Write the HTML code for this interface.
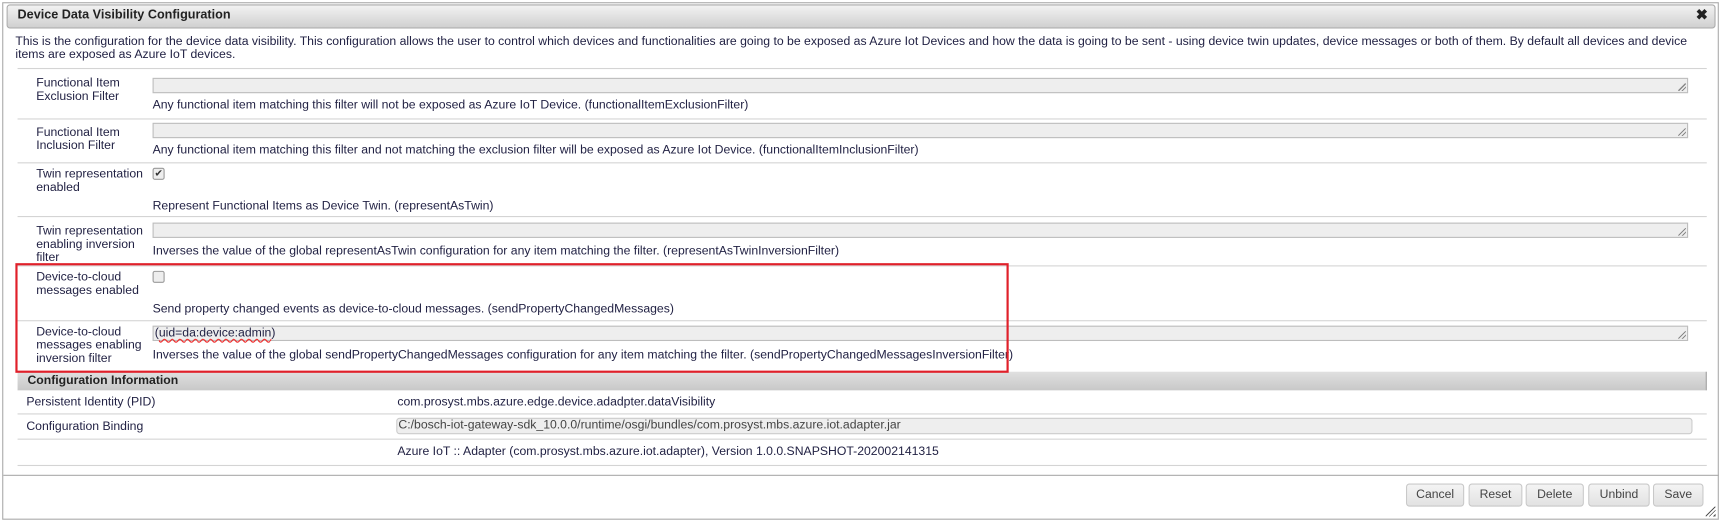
<!DOCTYPE html>
<html><head><meta charset="utf-8"><style>
*{margin:0;padding:0;box-sizing:border-box}
html,body{width:1721px;height:523px;background:#fff;overflow:hidden}
#w{position:absolute;left:0;top:0;width:1568px;height:477px;transform:scale(1.0976,1.0965);transform-origin:0 0;font-family:"Liberation Sans",sans-serif;font-size:11.15px;color:#222244}
.a{position:absolute;white-space:nowrap}
.hl{position:absolute;height:1px;background:#d4d4d4}
.ta{position:absolute;height:14px;background:#eeeeee;border:1px solid #bdbdbd}
.ta:after{content:"";position:absolute;right:1px;bottom:1px;width:7px;height:7px;background:linear-gradient(135deg,transparent 45%,#888 45%,#888 55%,transparent 55%,transparent 70%,#888 70%,#888 80%,transparent 80%)}
.btn{position:absolute;top:441px;height:21px;border:1px solid #c8c8c8;border-radius:3px;background:linear-gradient(#f4f4f4,#e2e2e2);color:#444;text-align:center;line-height:19px;font-size:11.1px}
.lab{position:absolute;left:33px;line-height:12px;white-space:nowrap}
</style></head><body><div id="w">
<div style="position:absolute;left:2px;top:2px;width:1564px;height:472px;border:1px solid #aaa"></div>
<div style="position:absolute;left:6px;top:4px;width:1557px;height:22px;border:1px solid #aaa;border-radius:3px;background:linear-gradient(#f2f2f2,#d0d0d0)"></div>
<div class="a" style="left:16px;top:8px;font-weight:bold;font-size:11.5px;color:#222">Device Data Visibility Configuration</div>
<div class="a" style="left:1545px;top:6px;font-weight:bold;font-size:13px;color:#222">✖</div>
<div class="a" style="left:14px;top:32px;line-height:12px">This is the configuration for the device data visibility. This configuration allows the user to control which devices and functionalities are going to be exposed as Azure Iot Devices and how the data is going to be sent - using device twin updates, device messages or both of them. By default all devices and device<br>items are exposed as Azure IoT devices.</div>

<div class="hl" style="left:16px;width:1539px;top:62px"></div>
<div class="lab" style="top:70px">Functional Item<br>Exclusion Filter</div>
<div class="ta" style="left:139px;width:1399px;top:71px"></div>
<div class="a" style="left:139px;top:90px">Any functional item matching this filter will not be exposed as Azure IoT Device. (functionalItemExclusionFilter)</div>

<div class="hl" style="left:16px;width:1539px;top:108px"></div>
<div class="lab" style="top:115px">Functional Item<br>Inclusion Filter</div>
<div class="ta" style="left:139px;width:1399px;top:112px"></div>
<div class="a" style="left:139px;top:131px">Any functional item matching this filter and not matching the exclusion filter will be exposed as Azure Iot Device. (functionalItemInclusionFilter)</div>

<div class="hl" style="left:16px;width:1539px;top:148px"></div>
<div class="lab" style="top:153px">Twin representation<br>enabled</div>
<div style="position:absolute;left:139px;top:153px;width:11px;height:11px;border:1px solid #999;border-radius:2px;background:#eee;font-size:9px;line-height:9px;text-align:center;color:#333">✔</div>
<div class="a" style="left:139px;top:182px">Represent Functional Items as Device Twin. (representAsTwin)</div>

<div class="hl" style="left:16px;width:1539px;top:197px"></div>
<div class="lab" style="top:205px">Twin representation<br>enabling inversion<br>filter</div>
<div class="ta" style="left:139px;width:1399px;top:203px"></div>
<div class="a" style="left:139px;top:223px">Inverses the value of the global representAsTwin configuration for any item matching the filter. (representAsTwinInversionFilter)</div>

<div class="hl" style="left:16px;width:1539px;top:242px"></div>
<div class="lab" style="top:247px">Device-to-cloud<br>messages enabled</div>
<div style="position:absolute;left:139px;top:247px;width:11px;height:11px;border:1px solid #999;border-radius:2px;background:#eee"></div>
<div class="a" style="left:139px;top:276px">Send property changed events as device-to-cloud messages. (sendPropertyChangedMessages)</div>

<div class="hl" style="left:16px;width:1539px;top:292px"></div>
<div class="lab" style="top:297px">Device-to-cloud<br>messages enabling<br>inversion filter</div>
<div class="ta" style="left:139px;width:1399px;top:297px"></div>
<div class="a" style="left:141px;top:297px;line-height:14px">(<span style="text-decoration:underline wavy #e33">uid=da:device:admin</span>)</div>
<div class="a" style="left:139px;top:318px">Inverses the value of the global sendPropertyChangedMessages configuration for any item matching the filter. (sendPropertyChangedMessagesInversionFilter)</div>

<div style="position:absolute;left:16px;top:339px;width:1539px;height:17px;background:linear-gradient(#e0e0e0,#c8c8c8);border-right:1px solid #999"></div>
<div class="a" style="left:25px;top:341px;font-weight:bold;color:#222">Configuration Information</div>

<div style="position:absolute;left:14px;top:240px;width:905px;height:100px;border:2px solid #e0202a"></div>

<div class="a" style="left:24px;top:361px">Persistent Identity (PID)</div>
<div class="a" style="left:362px;top:361px">com.prosyst.mbs.azure.edge.device.adadpter.dataVisibility</div>
<div class="hl" style="left:16px;width:1539px;top:377px"></div>
<div class="a" style="left:24px;top:383px">Configuration Binding</div>
<div style="position:absolute;left:361px;top:381px;width:1181px;height:15px;background:#eee;border:1px solid #ccc;border-radius:3px"></div>
<div class="a" style="left:363px;top:382px;color:#444">C:/bosch-iot-gateway-sdk_10.0.0/runtime/osgi/bundles/com.prosyst.mbs.azure.iot.adapter.jar</div>
<div class="hl" style="left:16px;width:1539px;top:400px"></div>
<div class="a" style="left:362px;top:406px">Azure IoT :: Adapter (com.prosyst.mbs.azure.iot.adapter), Version 1.0.0.SNAPSHOT-202002141315</div>
<div class="hl" style="left:16px;width:1539px;top:424px"></div>

<div style="position:absolute;left:3px;top:433px;width:1563px;height:1px;background:#aaa"></div>
<div class="btn" style="left:1281px;width:53px">Cancel</div>
<div class="btn" style="left:1338px;width:49px">Reset</div>
<div class="btn" style="left:1390px;width:53px">Delete</div>
<div class="btn" style="left:1447px;width:56px">Unbind</div>
<div class="btn" style="left:1506px;width:46px">Save</div>
<div style="position:absolute;left:1554px;top:462px;width:9px;height:9px;background:linear-gradient(135deg,transparent 45%,#555 45%,#555 52%,transparent 52%,transparent 65%,#555 65%,#555 72%,transparent 72%,transparent 85%,#555 85%)"></div>
</div></body></html>
